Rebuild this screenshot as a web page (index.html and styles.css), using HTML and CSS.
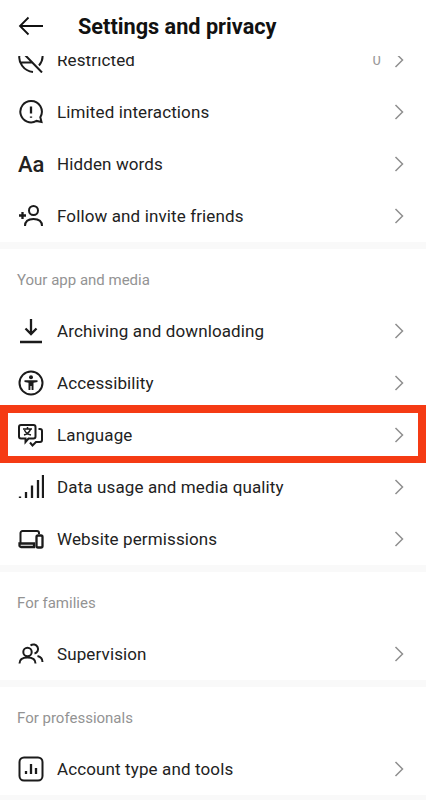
FILE: index.html
```html
<!DOCTYPE html>
<html>
<head>
    <meta charset="UTF-8">
    <title>Settings and privacy</title>
    <link rel="stylesheet" href="styles.css">
</head>
<body>
    <div class="page">
        <header class="topBar">
            <svg class="backIcon" viewBox="0 0 26 20"><path d="M25 10H2M10.500 1.500 2 10l8.500 8.500"/></svg>
            <h1>Settings and privacy</h1>
        </header>
        <main class="list">
            <section class="group">
                <div class="row">
                    <svg class="icon" viewBox="0 0 26 26"><path d="M1.500 8c-1.500 7 4 16 13.500 17M3 15.500h12M7 8l17 17.500M24.500 8c.5 4-.5 7-3.500 10.500"/></svg>
                    <span class="label">Restricted</span>
                    <span class="count">0</span>
                    <svg class="chevron" viewBox="0 0 10 16"><path d="M1.500 1 8.500 8l-7 7"/></svg>
                </div>
                <div class="row">
                    <svg class="icon" viewBox="0 0 26 26"><path d="M13 2a10.700 10.700 0 1 0 5.500 19.900L23.500 23l-1.200-4.800A10.700 10.700 0 0 0 13 2Z"/><path class="thick" d="M13 7.500v7M13 17.500v1.200"/></svg>
                    <span class="label">Limited interactions</span>
                    <svg class="chevron" viewBox="0 0 10 16"><path d="M1.500 1 8.500 8l-7 7"/></svg>
                </div>
                <div class="row">
                    <span class="aaIcon">Aa</span>
                    <span class="label">Hidden words</span>
                    <svg class="chevron" viewBox="0 0 10 16"><path d="M1.500 1 8.500 8l-7 7"/></svg>
                </div>
                <div class="row">
                    <svg class="icon" viewBox="0 0 26 26"><circle cx="15.500" cy="7.500" r="4.500"/><path d="M7 23c0-5 3.500-7 8.500-7s8.500 2 8.500 7"/><path class="thick" d="M1 12.500h7M4.500 9v7"/></svg>
                    <span class="label">Follow and invite friends</span>
                    <svg class="chevron" viewBox="0 0 10 16"><path d="M1.500 1 8.500 8l-7 7"/></svg>
                </div>
            </section>
            <section class="group">
                <p class="groupTitle">Your app and media</p>
                <div class="row">
                    <svg class="icon" viewBox="0 0 26 26"><path class="thick" d="M13 1v15M7.500 10.500l5.500 5.500 5.500-5.500M2 24h22"/></svg>
                    <span class="label">Archiving and downloading</span>
                    <svg class="chevron" viewBox="0 0 10 16"><path d="M1.500 1 8.500 8l-7 7"/></svg>
                </div>
                <div class="row">
                    <svg class="icon" viewBox="0 0 26 26"><circle cx="13" cy="13" r="11.500"/><circle class="solid" cx="13" cy="7.300" r="2"/><path class="solid" d="M6.500 10.200h13v1.800l-4 .8V20h-1.900v-4h-1.200v4h-1.900v-7.200l-4-.8Z"/></svg>
                    <span class="label">Accessibility</span>
                    <svg class="chevron" viewBox="0 0 10 16"><path d="M1.500 1 8.500 8l-7 7"/></svg>
                </div>
                <div class="row highlighted">
                    <svg class="icon" viewBox="0 0 26 26"><path d="M3 3h12.500a2 2 0 0 1 2 2v9.500a2 2 0 0 1-2 2h-5L7.500 20v-3.500H3a2 2 0 0 1-2-2V5a2 2 0 0 1 2-2Z"/><path d="M20.500 7h1.500a2 2 0 0 1 2 2v9a2 2 0 0 1-2 2h-4L14.500 23.500 12 20.500"/><path class="thin" d="M5 7h9M9.500 5v2M12.500 7c-.7 3-3 5-6.500 6M6.500 8c1 2.500 3 4.300 6.500 5"/></svg>
                    <span class="label">Language</span>
                    <svg class="chevron" viewBox="0 0 10 16"><path d="M1.500 1 8.500 8l-7 7"/></svg>
                </div>
                <div class="row">
                    <svg class="icon" viewBox="0 0 26 26"><path class="thick" d="M2 24v-1.500M8 24v-6M14 24V11.500M20 24V6M25 24V1"/></svg>
                    <span class="label">Data usage and media quality</span>
                    <svg class="chevron" viewBox="0 0 10 16"><path d="M1.500 1 8.500 8l-7 7"/></svg>
                </div>
                <div class="row">
                    <svg class="icon" viewBox="0 0 26 26"><path d="M2.500 17V7a2 2 0 0 1 2-2H19a2 2 0 0 1 2 2v1"/><path class="thick" d="M1.500 17.500h14.500v3.500H3a1.500 1.500 0 0 1-1.500-1.500Z"/><rect class="thick" x="18.500" y="9.500" width="6" height="12" rx="1.500"/></svg>
                    <span class="label">Website permissions</span>
                    <svg class="chevron" viewBox="0 0 10 16"><path d="M1.500 1 8.500 8l-7 7"/></svg>
                </div>
            </section>
            <section class="group">
                <p class="groupTitle">For families</p>
                <div class="row">
                    <svg class="icon" viewBox="0 0 26 26"><circle cx="9.500" cy="11" r="4.200"/><path d="M1.500 22.500c0-4 3.500-6 8-6s8 2 8 6M12.500 4.500A4.600 4.600 0 1 1 16.500 12.500M19.500 15c3 .7 5 2.500 5 6"/></svg>
                    <span class="label">Supervision</span>
                    <svg class="chevron" viewBox="0 0 10 16"><path d="M1.500 1 8.500 8l-7 7"/></svg>
                </div>
            </section>
            <section class="group">
                <p class="groupTitle">For professionals</p>
                <div class="row">
                    <svg class="icon" viewBox="0 0 26 26"><rect x="1.500" y="1.500" width="23" height="23" rx="4.500"/><path class="thick" d="M8 15v3M13 8v10M18 12v6"/></svg>
                    <span class="label">Account type and tools</span>
                    <svg class="chevron" viewBox="0 0 10 16"><path d="M1.500 1 8.500 8l-7 7"/></svg>
                </div>
            </section>
        </main>
    </div>
</body>
</html>
```

FILE: styles.css
```css
html, body {
    margin: 0;
    padding: 0;
    background: white;
}
.page {
    width: 426px;
    height: 800px;
    overflow: hidden;
    font-family: Roboto, "Liberation Sans", sans-serif;
    color: #222;
}
.topBar {
    display: flex;
    align-items: center;
    height: 56px;
    padding: 0 0 4px 18px;
    box-sizing: border-box;
    position: relative;
    z-index: 2;
    background: white;
}
.topBar h1 {
    margin: 0 0 0 34px;
    font-size: 21.700px;
    font-weight: 700;
    color: #111;
}
.backIcon {
    width: 26px;
    height: 20px;
    fill: none;
    stroke: #111;
    stroke-width: 1.800;
}
.list {
    margin-top: -22px;
}
.group {
    border-bottom: 7px solid #f9f9f9;
    background: white;
}
.groupTitle {
    margin: 0;
    height: 56px;
    padding: 20px 0 0 17px;
    box-sizing: border-box;
    font-size: 15px;
    line-height: 22px;
    color: #939393;
}
.row {
    display: flex;
    align-items: center;
    height: 52px;
    padding: 0 22px 0 18px;
    position: relative;
}
.label {
    flex: 1;
    margin-left: 13px;
    font-size: 17px;
    letter-spacing: 0.120px;
}
.count {
    margin-right: 13px;
    font-size: 15px;
    color: #9a9a9a;
}
.icon {
    width: 26px;
    height: 26px;
    flex: none;
    fill: none;
    stroke: #1b1b1b;
    stroke-width: 2;
}
.icon .thick {
    stroke-width: 2.300;
}
.icon .thin {
    stroke-width: 1.500;
}
.icon .solid {
    fill: #1b1b1b;
    stroke: none;
}
.aaIcon {
    width: 26px;
    flex: none;
    font-size: 22px;
    font-weight: 500;
    white-space: nowrap;
}
.chevron {
    width: 10px;
    height: 16px;
    flex: none;
    fill: none;
    stroke: #8f8f8f;
    stroke-width: 1.500;
}
/* red box drawn over the row */
.highlighted::after {
    content: "";
    position: absolute;
    left: 0;
    top: -4px;
    width: 426px;
    height: 58px;
    box-sizing: border-box;
    border: 8px solid #f53b14;
    border-bottom-width: 7px;
}
```
